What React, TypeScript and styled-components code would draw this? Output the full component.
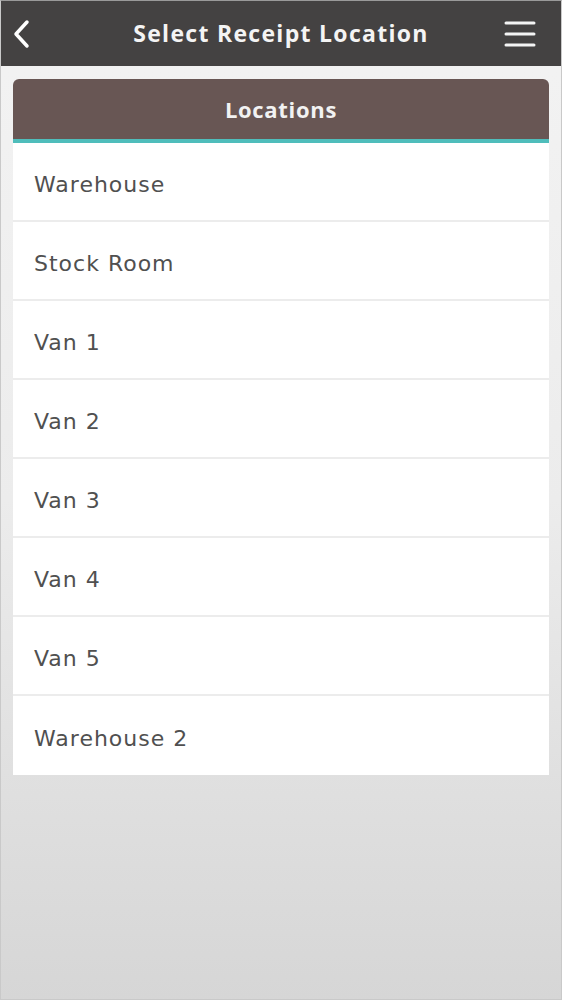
import React from "react";
import styled, { createGlobalStyle } from "styled-components";

const Global = createGlobalStyle`
  html, body { margin: 0; padding: 0; }
  body {
    width: 562px;
    height: 1000px;
    font-family: "DejaVu Sans", sans-serif;
    background: linear-gradient(180deg, #f3f3f3 0%, #ececec 50%, #d6d6d6 100%);
    overflow: hidden;
  }
`;

const Screen = styled.div`
  box-sizing: border-box;
  width: 562px;
  height: 1000px;
  border: 1px solid #c9c9c9;
  border-top-color: #9a9a9a;
  display: flex;
  flex-direction: column;
`;

const TopBar = styled.header`
  height: 65px;
  background: #444242;
  display: grid;
  grid-template-columns: 1fr auto 1fr;
  align-items: center;
  padding: 0 25px;
  color: #fff;
  flex-shrink: 0;
`;

const IconButton = styled.div<{ $end?: boolean }>`
  display: flex;
  align-items: center;
  justify-content: ${(p) => (p.$end ? "flex-end" : "flex-start")};
  margin-left: ${(p) => (p.$end ? "0" : "-14px")};
  height: 100%;
`;

const Title = styled.h1`
  margin: 0 0 2px;
  text-align: center;
  font-family: "Open Sans", sans-serif;
  font-size: 23px;
  font-weight: 700;
  letter-spacing: 1.3px;
  color: #f4f4f4;
`;

const Content = styled.main`
  padding: 13px 12px 0 12px;
`;

const Card = styled.section`
  background: #fff;
  border-radius: 6px 6px 0 0;
  overflow: hidden;
`;

const CardHeader = styled.div`
  box-sizing: content-box;
  height: 59px;
  padding-bottom: 1px;
  background: #685654;
  border-bottom: 4px solid #4fbdbb;
  display: flex;
  align-items: center;
  justify-content: center;
  font-family: "Open Sans", sans-serif;
  color: #f2f2f2;
  font-size: 22px;
  font-weight: 700;
  letter-spacing: 0.7px;
`;

const List = styled.ul`
  list-style: none;
  margin: 0;
  padding: 0;
`;

const Row = styled.li`
  box-sizing: border-box;
  height: 79px;
  border-bottom: 2px solid #ececec;
  display: flex;
  align-items: center;
  padding: 5px 0 0 21px;
  font-size: 22px;
  letter-spacing: 1px;
  color: #505050;
  &:last-child { border-bottom: none; }
`;

const locations = [
  "Warehouse",
  "Stock Room",
  "Van 1",
  "Van 2",
  "Van 3",
  "Van 4",
  "Van 5",
  "Warehouse 2",
];

export default function App() {
  return (
    <>
      <Global />
      <Screen>
        <TopBar>
          <IconButton>
            <svg width="20" height="32" viewBox="0 0 20 32">
              <path d="M15 4 L4 16 L15 28" fill="none" stroke="#fff" strokeWidth="3.5" strokeLinecap="round" strokeLinejoin="round" />
            </svg>
          </IconButton>
          <Title>Select Receipt Location</Title>
          <IconButton $end>
            <svg width="32" height="28" viewBox="0 0 32 28">
              <g stroke="#f4f4f4" strokeWidth="3" strokeLinecap="round">
                <line x1="2" y1="3" x2="30" y2="3" />
                <line x1="2" y1="14" x2="30" y2="14" />
                <line x1="2" y1="25" x2="30" y2="25" />
              </g>
            </svg>
          </IconButton>
        </TopBar>
        <Content>
          <Card>
            <CardHeader>Locations</CardHeader>
            <List>
              {locations.map((l) => (
                <Row key={l}>{l}</Row>
              ))}
            </List>
          </Card>
        </Content>
      </Screen>
    </>
  );
}
